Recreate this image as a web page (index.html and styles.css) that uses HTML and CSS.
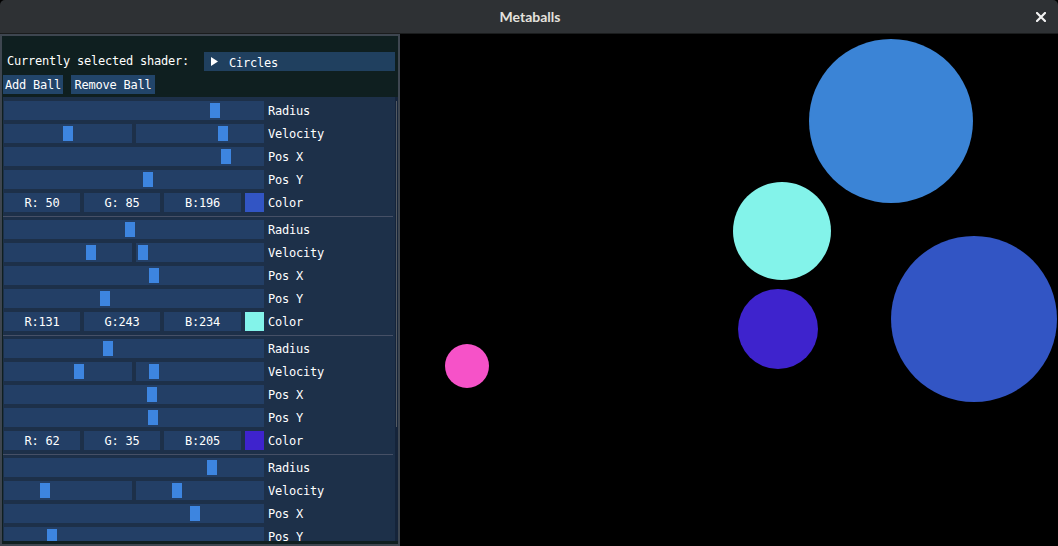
FILE: index.html
```html
<!DOCTYPE html>
<html>
<head>
<meta charset="utf-8">
<title>Metaballs</title>
<link rel="stylesheet" href="styles.css">
</head>
<body>
<div class="app">
  <header class="titlebar">
    <span></span>
    <span class="title">Metaballs</span>
    <svg class="close" width="10" height="10" viewBox="0 0 10 10"><path d="M1 1 L9 9 M9 1 L1 9" stroke="#f2f2f2" stroke-width="2.2" stroke-linecap="square"/></svg>
  </header>
  <main class="viewport">
    <svg class="scene" width="1058" height="512" viewBox="0 0 1058 512">
      <circle cx="891" cy="87" r="82" fill="#3b84d6"/>
      <circle cx="782" cy="197" r="49" fill="rgb(131,243,234)"/>
      <circle cx="778" cy="295" r="40" fill="rgb(62,35,205)"/>
      <circle cx="974" cy="285" r="83" fill="rgb(50,85,196)"/>
      <circle cx="467" cy="332" r="22" fill="#f652c8"/>
    </svg>
    <section class="panel">
      <div class="shader-row">
        <span class="shader-label">Currently selected shader:</span>
        <div class="combo">
          <svg class="arrow" width="7" height="9" viewBox="0 0 7 9"><path d="M0 0 L7 4.5 L0 9 Z" fill="#fff"/></svg>
          <span class="combo-text">Circles</span>
        </div>
      </div>
      <div class="buttons">
        <button class="btn btn-add">Add Ball</button>
        <button class="btn btn-remove">Remove Ball</button>
      </div>
      <div class="child">
        <div class="child-scroll">
          <div class="ball">
            <div class="row"><div class="field"><div class="slider"><span class="grab" style="left:206px"></span></div></div><span class="label">Radius</span></div>
            <div class="row"><div class="field two"><div class="slider"><span class="grab" style="left:59px"></span></div><div class="slider"><span class="grab" style="left:82px"></span></div></div><span class="label">Velocity</span></div>
            <div class="row"><div class="field"><div class="slider"><span class="grab" style="left:217px"></span></div></div><span class="label">Pos X</span></div>
            <div class="row"><div class="field"><div class="slider"><span class="grab" style="left:139px"></span></div></div><span class="label">Pos Y</span></div>
            <div class="row"><div class="field color"><div class="num">R: 50</div><div class="num">G: 85</div><div class="num">B:196</div><div class="swatch" style="background:rgb(50,85,196)"></div></div><span class="label">Color</span></div>
          </div>
          <hr class="sep">
          <div class="ball">
            <div class="row"><div class="field"><div class="slider"><span class="grab" style="left:121px"></span></div></div><span class="label">Radius</span></div>
            <div class="row"><div class="field two"><div class="slider"><span class="grab" style="left:82px"></span></div><div class="slider"><span class="grab" style="left:2px"></span></div></div><span class="label">Velocity</span></div>
            <div class="row"><div class="field"><div class="slider"><span class="grab" style="left:145px"></span></div></div><span class="label">Pos X</span></div>
            <div class="row"><div class="field"><div class="slider"><span class="grab" style="left:96px"></span></div></div><span class="label">Pos Y</span></div>
            <div class="row"><div class="field color"><div class="num">R:131</div><div class="num">G:243</div><div class="num">B:234</div><div class="swatch" style="background:rgb(131,243,234)"></div></div><span class="label">Color</span></div>
          </div>
          <hr class="sep">
          <div class="ball">
            <div class="row"><div class="field"><div class="slider"><span class="grab" style="left:99px"></span></div></div><span class="label">Radius</span></div>
            <div class="row"><div class="field two"><div class="slider"><span class="grab" style="left:70px"></span></div><div class="slider"><span class="grab" style="left:13px"></span></div></div><span class="label">Velocity</span></div>
            <div class="row"><div class="field"><div class="slider"><span class="grab" style="left:143px"></span></div></div><span class="label">Pos X</span></div>
            <div class="row"><div class="field"><div class="slider"><span class="grab" style="left:144px"></span></div></div><span class="label">Pos Y</span></div>
            <div class="row"><div class="field color"><div class="num">R: 62</div><div class="num">G: 35</div><div class="num">B:205</div><div class="swatch" style="background:rgb(62,35,205)"></div></div><span class="label">Color</span></div>
          </div>
          <hr class="sep">
          <div class="ball">
            <div class="row"><div class="field"><div class="slider"><span class="grab" style="left:203px"></span></div></div><span class="label">Radius</span></div>
            <div class="row"><div class="field two"><div class="slider"><span class="grab" style="left:36px"></span></div><div class="slider"><span class="grab" style="left:36px"></span></div></div><span class="label">Velocity</span></div>
            <div class="row"><div class="field"><div class="slider"><span class="grab" style="left:186px"></span></div></div><span class="label">Pos X</span></div>
            <div class="row"><div class="field"><div class="slider"><span class="grab" style="left:43px"></span></div></div><span class="label">Pos Y</span></div>
          </div>
        </div>
        <div class="scrollbar"><div class="thumb"></div></div>
      </div>
    </section>
  </main>
</div>
</body>
</html>
```
FILE: styles.css
```css
* { box-sizing: border-box; }
html, body { margin: 0; padding: 0; background: #000; }
body { width: 1058px; height: 546px; overflow: hidden; }

.app { width: 1058px; height: 546px; display: flex; flex-direction: column; }

.titlebar {
  height: 34px;
  flex: none;
  background: #2e3134;
  border-bottom: 1px solid #1a1c1d;
  border-radius: 5px 5px 0 0;
  display: grid;
  grid-template-columns: 1fr auto 1fr;
  align-items: center;
}
.title {
  font-family: Lato, "Open Sans", sans-serif;
  font-weight: 700;
  font-size: 14px;
  color: #e4e2de;
  margin-left: 2px;
}
.close { justify-self: end; margin-right: 12px; }

.viewport { position: relative; flex: 1; background: #000; overflow: hidden; }
.scene { position: absolute; left: 0; top: 0; display: block; }

.panel {
  position: absolute;
  left: 0;
  top: 0;
  width: 400px;
  height: 512px;
  background: #0f1f20;
  border: 2px solid #3e4650;
  padding: 16px 0 0 1px;
  display: flex;
  flex-direction: column;
  font-family: "DejaVu Sans Mono", "Liberation Mono", monospace;
  font-size: 12px;
  letter-spacing: -0.22px;
  color: #fff;
}

.shader-row {
  display: flex;
  align-items: center;
  justify-content: space-between;
  height: 19px;
  padding-right: 3px;
}
.shader-label { padding-left: 4px; position: relative; top: -1px; }
.combo {
  width: 191px;
  height: 19px;
  background: #20405f;
  display: flex;
  align-items: center;
  padding-left: 7px;
}
.combo-text { position: relative; top: 1px; }
.arrow { margin-right: 11px; }

.buttons { display: flex; gap: 8px; margin-top: 4px; }
.btn {
  height: 19px;
  padding: 1px 0 0;
  border: 0;
  background: #22456a;
  color: #fff;
  font: inherit;
  letter-spacing: inherit;
  text-align: center;
}
.btn-add { width: 60px; }
.btn-remove { width: 84px; }

.child {
  margin-top: 3px;
  width: 395px;
  height: 444px;
  display: flex;
  overflow: hidden;
  background: #1d3049;
}
.child-scroll {
  width: 392px;
  padding: 4px 0 0 1px;
  display: flex;
  flex-direction: column;
}
.scrollbar {
  width: 3px;
  background: #15243a;
  padding-top: 4px;
}
.thumb {
  width: 1px;
  margin-left: 1px;
  height: 326px;
  background: #535a62;
}

.ball { display: flex; flex-direction: column; gap: 4px; flex: none; }
.row { display: flex; align-items: center; gap: 4px; height: 19px; }
.field { width: 260px; height: 19px; display: grid; gap: 4px; }
.field.two { grid-template-columns: 1fr 1fr; }
.field.color { grid-template-columns: 76px 76px 77px 19px; }

.slider { position: relative; height: 19px; background: #233f66; }
.grab {
  position: absolute;
  top: 2px;
  width: 10px;
  height: 15px;
  background: #3d85e0;
}
.num {
  height: 19px;
  padding-top: 1px;
  background: #233f66;
  display: flex;
  align-items: center;
  justify-content: center;
  white-space: pre;
}
.swatch { height: 19px; }
.label { line-height: 19px; padding-top: 2px; }

.sep {
  flex: none;
  width: 390px;
  height: 1px;
  border: 0;
  margin: 4px 0 3px -1px;
  background: #465066;
}
```
